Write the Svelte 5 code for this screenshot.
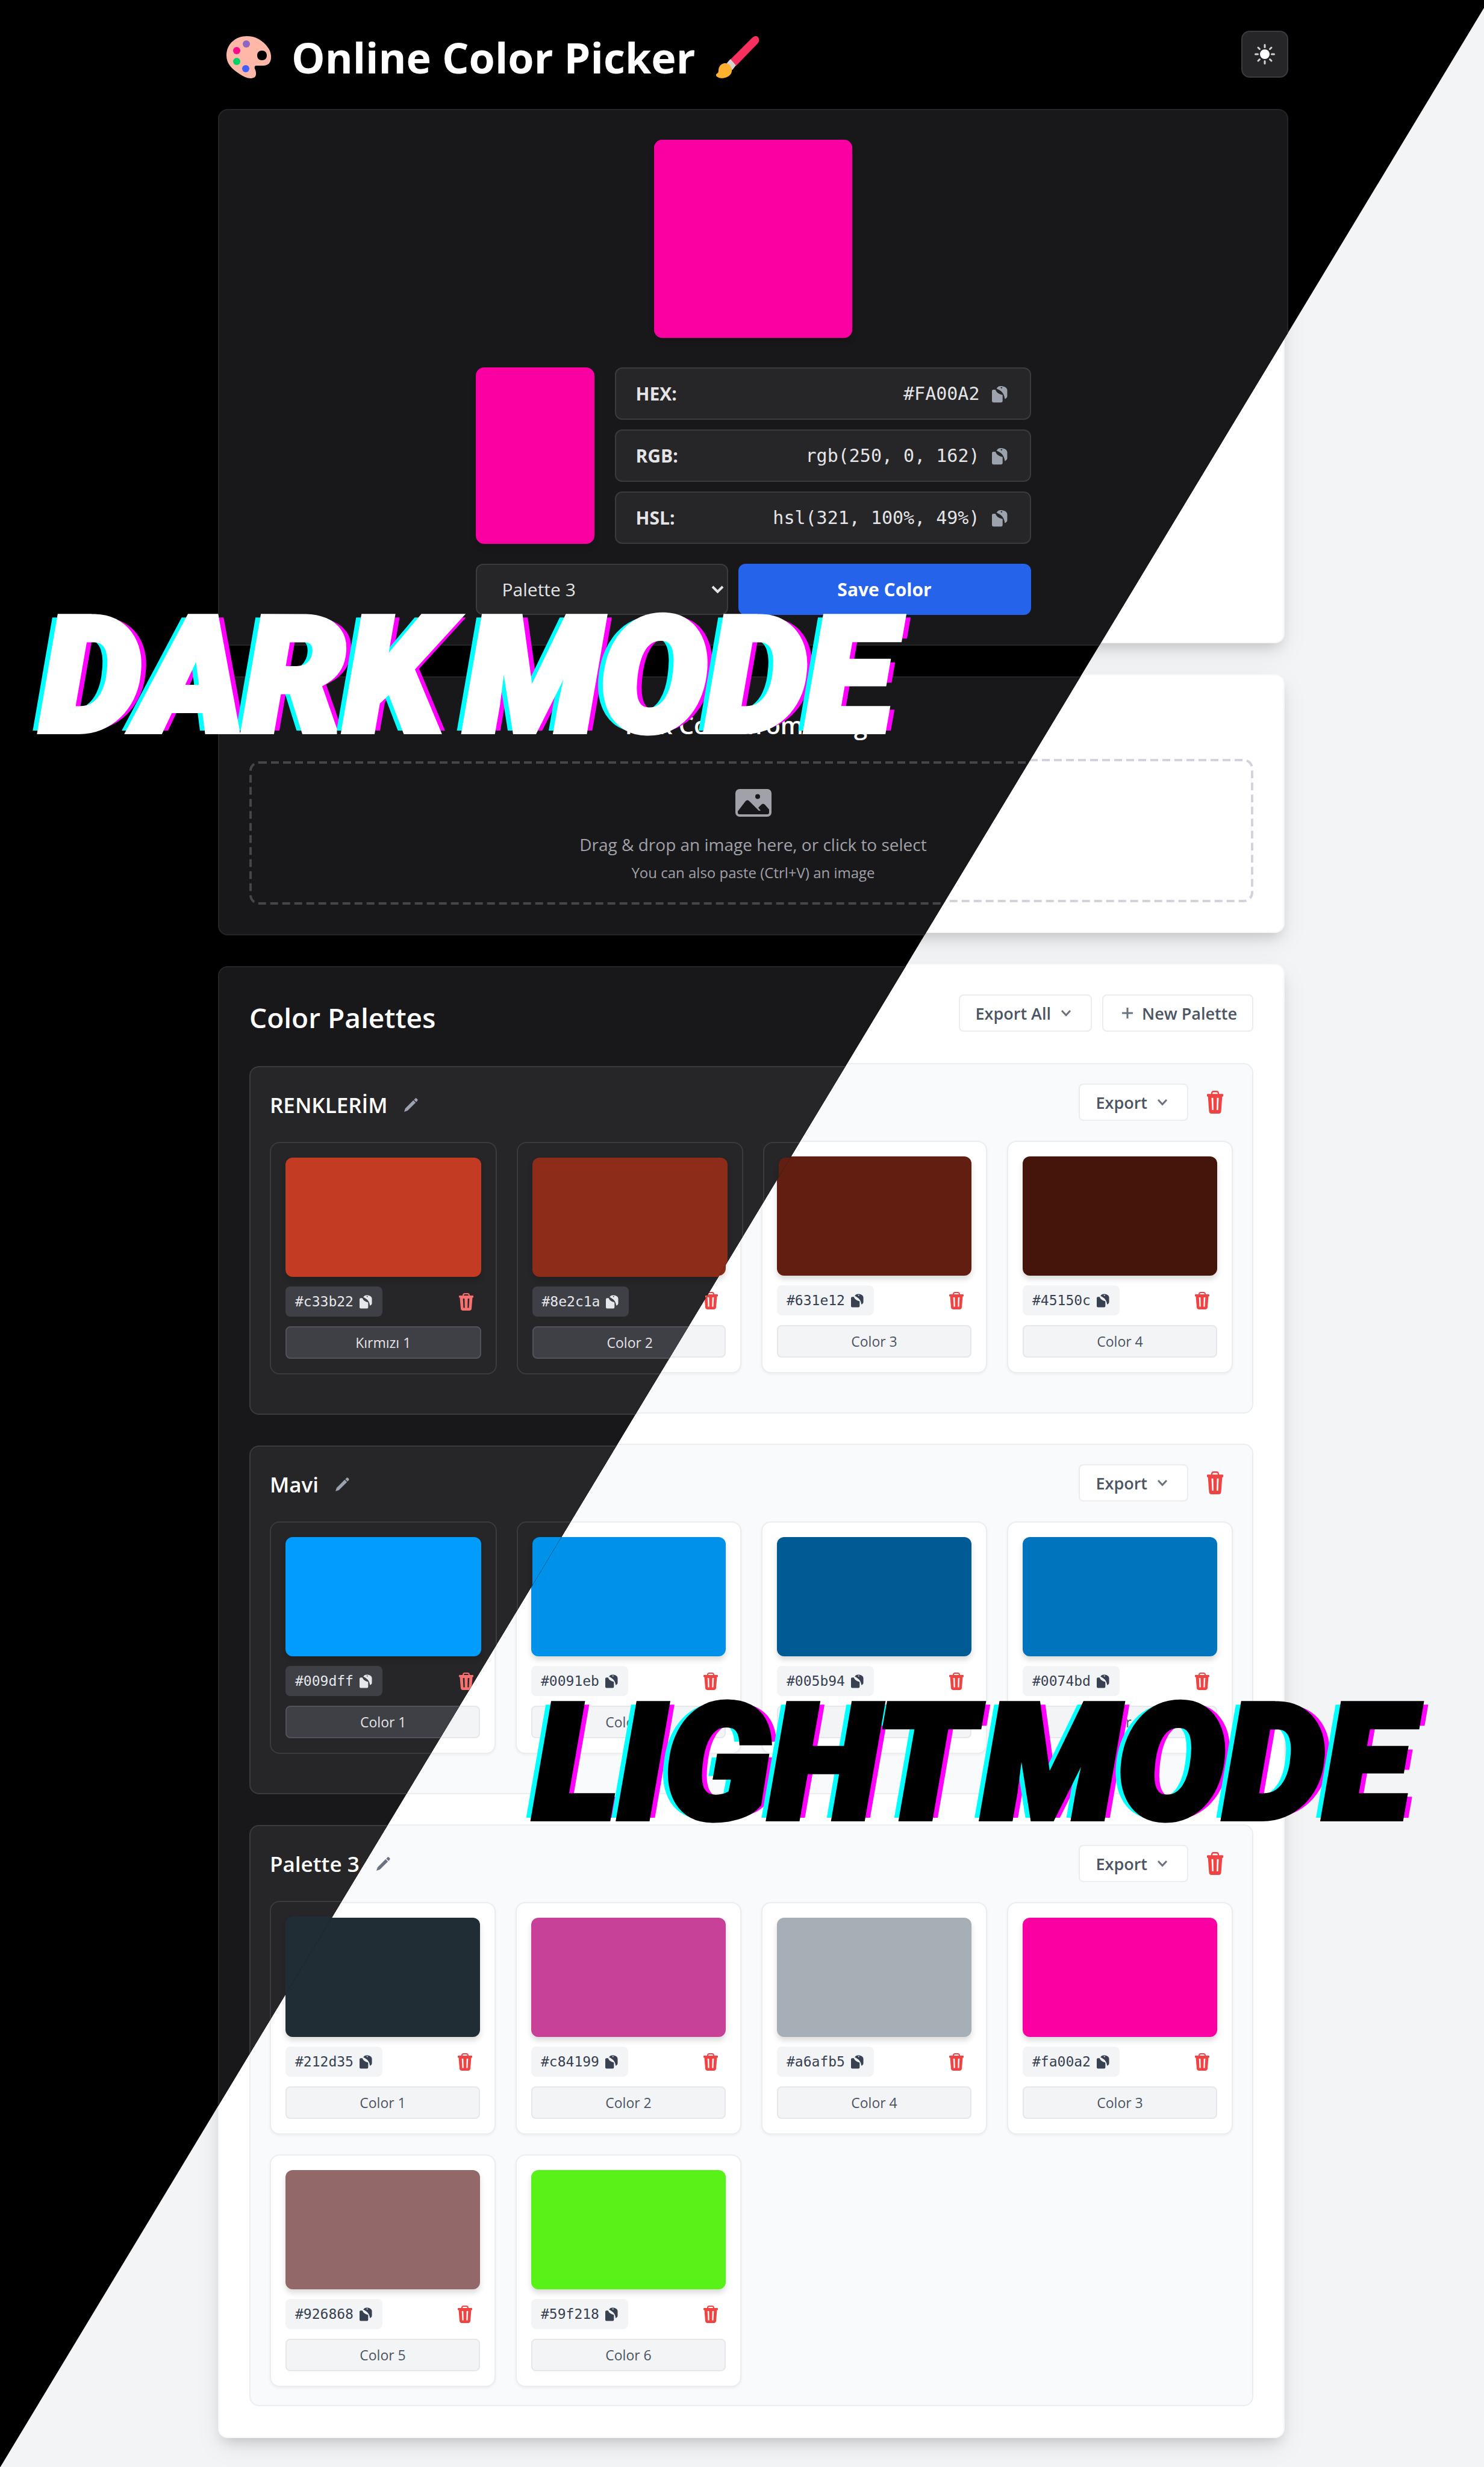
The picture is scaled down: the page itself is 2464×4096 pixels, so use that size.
<script>
  const formats = [
    { label: 'HEX:', value: '#FA00A2' },
    { label: 'RGB:', value: 'rgb(250, 0, 162)' },
    { label: 'HSL:', value: 'hsl(321, 100%, 49%)' },
  ];

  // `split` is the number of leading cards whose texts belong to the dark side.
  const palettes = [
    {
      name: 'RENKLERİM',
      split: 2,
      colors: [
        { hex: '#c33b22', name: 'Kırmızı 1' },
        { hex: '#8e2c1a', name: 'Color 2' },
        { hex: '#631e12', name: 'Color 3' },
        { hex: '#45150c', name: 'Color 4' },
      ],
    },
    {
      name: 'Mavi',
      split: 1,
      colors: [
        { hex: '#009dff', name: 'Color 1' },
        { hex: '#0091eb', name: 'Color 2' },
        { hex: '#005b94', name: 'Color 3' },
        { hex: '#0074bd', name: 'Color 4' },
      ],
    },
    {
      name: 'Palette 3',
      split: 0,
      colors: [
        { hex: '#212d35', name: 'Color 1' },
        { hex: '#c84199', name: 'Color 2' },
        { hex: '#a6afb5', name: 'Color 4' },
        { hex: '#fa00a2', name: 'Color 3' },
        { hex: '#926868', name: 'Color 5' },
        { hex: '#59f218', name: 'Color 6' },
      ],
    },
  ];

  const owns = (theme, split, i) => (theme === 'dark') === i < split;
</script>

{#snippet copyIcon()}
  <svg class="copy" viewBox="0 0 22 24" aria-hidden="true">
    <path d="M2 6h3c1 3 3 5.500 10 7.500V22a2 2 0 0 1-2 2H2a2 2 0 0 1-2-2V8a2 2 0 0 1 2-2z" />
    <path fill-rule="evenodd" d="M6.500 4.500C8 2 9.500 1.200 12 1c5 0 9.500 2 9.500 6v8c0 1.800-1 3-3.500 4.200-.3-5-2.500-9.500-7-12.300-1.500-.9-3-1.700-4.500-2.400zM12 3.200l1.300 1.300 1.500-1.200-1.400-1z" />
  </svg>
{/snippet}

{#snippet trashIcon()}
  <svg class="trash" viewBox="0 0 24 29" preserveAspectRatio="none" aria-hidden="true">
    <path fill-rule="evenodd" d="M6 4c0-2.500 1.300-4 3.500-4h5C16.700 0 18 1.500 18 4h5a1 1 0 0 1 1 1v1.500a1 1 0 0 1-1 1h-.5L21 25.500c-.2 2.200-1.500 3.500-3.500 3.500h-11C4.500 29 3.200 27.700 3 25.500L1.500 7.500H1a1 1 0 0 1-1-1V5a1 1 0 0 1 1-1zM8 4h8c0-1.300-.6-2-1.700-2H9.700C8.600 2 8 2.700 8 4zM6.700 9l.8 15.500h2.200L9.300 9zM14.700 9l-.4 15.500h2.200L17.300 9z" />
  </svg>
{/snippet}

{#snippet chevron()}
  <svg class="chevron" viewBox="0 0 18 12" aria-hidden="true"><path d="M2 2l7 7.500L16 2" /></svg>
{/snippet}

{#snippet page(theme)}
  <div class="layer {theme}">
    <header class="top">
      <h1>
        <svg class="emoji" viewBox="0 0 74 70" aria-hidden="true">
          <path fill="#ffb8a8" fill-rule="evenodd" d="M34 0c14 0 23 6 31 14 6 7 9 12 9 21 0 9-5 14-13 14H50c-3 0-4 2-3 5 2 4 2 6 2 9 0 5-4 7-9 7-6 0-12-3-18-7C8 54 0 45 0 32 0 13 15 0 34 0zM59 24c-5 0-8 3-8 8s3 8 8 8 8-3 8-8-3-8-8-8z" />
          <circle cx="33" cy="13" r="6" fill="#8d65c5" />
          <circle cx="17" cy="24" r="6" fill="#f70a8d" />
          <circle cx="17" cy="42" r="6" fill="#00d26a" />
          <circle cx="32" cy="54" r="6" fill="#3f5fff" />
        </svg>
        <span>Online Color Picker</span>
        <svg class="emoji" viewBox="0 0 70 68" aria-hidden="true">
          <path fill="#f92f60" d="M23 38L58 3c4-4 8-4 10-1 2 3 2 6-1 10L32 48z" />
          <path fill="#d3d3d3" d="M17 44l6-7 9 10-6 8z" />
          <path fill="#ffb02e" d="M5 50c3-6 9-8 15-5 6 5 7 12 3 17-5 6-16 8-22 3-2-2-1-4 1-5 3-2 1-6 3-10z" />
        </svg>
      </h1>
      <button class="theme" aria-label="Toggle theme">
        <svg viewBox="0 0 34 34" aria-hidden="true">
          <circle cx="17" cy="17" r="8" />
          <g stroke-width="3" stroke-linecap="round">
            <path d="M17 1.500v4M17 28.500v4M1.500 17h4M28.500 17h4M6 6l2.500 2.500M25.500 25.500L28 28M6 28l2.500-2.500M25.500 8.500L28 6" />
          </g>
        </svg>
      </button>
    </header>

    <section class="panel picker">
      <input class="big" type="color" value="#fa00a2" aria-label="Pick a color" />
      <div class="values">
        <div class="preview"></div>
        <div class="rows">
          {#each formats as f}
            <div class="row">
              <strong>{f.label}</strong>
              <span class="val"><code>{f.value}</code><button aria-label="Copy {f.label}">{@render copyIcon()}</button></span>
            </div>
          {/each}
        </div>
      </div>
      <div class="save">
        <div class="pick">
          <select aria-label="Palette"><option>Palette 3</option></select>
          <svg viewBox="0 0 21 13" aria-hidden="true"><path d="M2 2l8.500 8.500L19 2" /></svg>
        </div>
        <button class="primary">Save Color</button>
      </div>
    </section>

    <section class="panel image">
      <h2>Pick Color from Image</h2>
      <button class="drop">
        <svg class="dash" aria-hidden="true"><rect x="2" y="2" rx="14" /></svg>
        <svg class="photo" viewBox="0 0 60 46" aria-hidden="true">
          <path fill-rule="evenodd" d="M7 0h46a7 7 0 0 1 7 7v32a7 7 0 0 1-7 7H7a7 7 0 0 1-7-7V7a7 7 0 0 1 7-7zM4 37v2a3 3 0 0 0 3 3h46a3 3 0 0 0 3-3v-5l-7-8c-2-2-4-2-6 0l-5 5 4 5-3 0-16-16c-2-2-4-2-6 0zM37 8.500a4 4 0 1 0 0 8 4 4 0 0 0 0-8z" />
        </svg>
        <span class="lead">Drag &amp; drop an image here, or click to select</span>
        <span class="hint">You can also paste (Ctrl+V) an image</span>
      </button>
    </section>

    <section class="panel library">
      <div class="bar">
        <h2>Color Palettes</h2>
        <div class="tools">
          <button class="ghost">Export All {@render chevron()}</button>
          <button class="ghost">
            <svg class="plus" viewBox="0 0 20 20" aria-hidden="true"><path d="M10 1v18M1 10h18" /></svg>New Palette
          </button>
        </div>
      </div>
      <div class="list">
        {#each palettes as p}
          <article class="palette">
            <div class="head">
              <h3>{p.name}</h3>
              <button class="edit" aria-label="Rename {p.name}">
                <svg viewBox="0 0 24 24" aria-hidden="true">
                  <path d="M0 24l2-6L16 4l4 4L6 22zM17 3l1.500-1.500c1.500-1.500 2.500-1.500 4 0s1.500 2.500 0 4L21 7z" />
                </svg>
              </button>
              <button class="ghost">Export {@render chevron()}</button>
              <button class="remove" aria-label="Delete {p.name}">{@render trashIcon()}</button>
            </div>
            <div class="cards">
              {#each p.colors as c, i}
                {@const own = owns(theme, p.split, i)}
                <div class="card">
                  <div class="swatch" style:background={c.hex}></div>
                  <div class="meta">
                    <button class="chip" class:away={!own}>{c.hex}{@render copyIcon()}</button>
                    <button class="bin" aria-label="Delete {c.name}">{@render trashIcon()}</button>
                  </div>
                  <input type="text" value={own ? c.name : ''} aria-label="Color name" />
                </div>
              {/each}
            </div>
          </article>
        {/each}
      </div>
    </section>
  </div>
{/snippet}

<main>
  {@render page('light')}
  {@render page('dark')}
  <p class="banner dark-banner"><span>DARK</span> <span>MODE</span></p>
  <p class="banner light-banner"><span>LIGHT</span> <span>MODE</span></p>
</main>

<style>
  :global(body) {
    margin: 0;
  }
  main {
    display: grid;
    position: relative;
    overflow: hidden;
    font-family: 'Open Sans', 'Noto Sans', sans-serif;
  }
  main * {
    box-sizing: border-box;
  }
  .layer {
    grid-area: 1 / 1;
    min-width: 0;
    padding: 51px 325px 49px 362px;
    background: var(--page);
    color: var(--title);
  }
  .dark {
    --page: #000;
    --panel: #18181a;
    --panel-line: #252528;
    --box: #262628;
    --line: #3a3a40;
    --card: #262628;
    --chip: #3f3f46;
    --chip-line: #52525b;
    --title: #fff;
    --text: #e4e4e7;
    --muted: #a1a1aa;
    --icon: #9ca3af;
    --copy: #e5e7eb;
    --dash: #45454c;
    --red: #f87171;
    --btn: #3f3f46;
    --panel-shadow: none;
    --card-shadow: none;
    --top-gap: 52px;
    --bar-gap: 43px;
    --head: 60px;
    --head-gap: 32px;
    --list-gap: 51px;
    clip-path: polygon(0 0, 100% 0, 100% 0.32%, 0 100%);
  }
  .light {
    --page: #f3f4f6;
    --panel: #fff;
    --panel-line: #f7f7f8;
    --box: #f9fafb;
    --line: #ebedf0;
    --card: #fff;
    --chip: #f3f4f6;
    --chip-line: #e5e7eb;
    --title: #1f2937;
    --text: #4b5563;
    --muted: #6b7280;
    --icon: #6b7280;
    --copy: #374151;
    --dash: #d1d5db;
    --red: #ef4444;
    --btn: #fff;
    --panel-shadow: 0 12px 22px -8px rgb(0 0 0 / 17%), 0 16px 44px -2px rgb(0 0 0 / 8%);
    --card-shadow: 0 2px 4px rgb(0 0 0 / 5%);
    --top-gap: 48px;
    --bar-gap: 42px;
    --head: 62px;
    --head-gap: 33px;
    --list-gap: 50px;
    padding-right: 331px;
  }
  /* Items that lie wholly on the other theme's side of the diagonal. */
  .light .top > *,
  .light .picker > *,
  .light h2,
  .light h3,
  .light .lead,
  .light .hint,
  .light .photo,
  .dark .ghost,
  .away {
    visibility: hidden;
  }
  h1,
  h2,
  h3,
  p {
    margin: 0;
  }
  button,
  input,
  select {
    font: inherit;
    color: inherit;
    margin: 0;
    padding: 0;
    border: 0;
    background: none;
  }
  svg {
    display: block;
    flex: none;
  }
  .top {
    display: flex;
    justify-content: space-between;
    height: 78px;
    margin-bottom: var(--top-gap);
  }
  h1 {
    display: flex;
    align-items: center;
    gap: 34px;
    padding-left: 14px;
    font-size: 70px;
    line-height: 88px;
    height: 88px;
    font-weight: 700;
  }
  .emoji {
    width: 74px;
    height: 70px;
  }
  .theme {
    display: grid;
    place-items: center;
    width: 78px;
    height: 78px;
    border: 2px solid var(--line);
    border-radius: 14px;
    background: var(--box);
  }
  .theme svg {
    width: 34px;
    fill: #fff;
    stroke: #d4d4d8;
  }
  .theme circle {
    stroke: none;
  }
  .panel {
    background: var(--panel);
    border: 2px solid var(--panel-line);
    border-radius: 16px;
    box-shadow: var(--panel-shadow);
    padding: 49px 50px;
    margin-bottom: 51px;
    position: relative;
  }
  .picker {
    display: flex;
    flex-direction: column;
    align-items: center;
  }
  .big {
    appearance: none;
    width: 329px;
    height: 329px;
    border-radius: 14px;
    overflow: hidden;
    background: #fa00a2;
    box-shadow: 0 7px 10px rgb(0 0 0 / 12%);
    margin-bottom: 49px;
  }
  .big::-webkit-color-swatch-wrapper {
    padding: 0;
  }
  .big::-webkit-color-swatch {
    border: 0;
  }
  .values,
  .save {
    display: flex;
    width: 922px;
    max-width: 100%;
  }
  .values {
    gap: 34px;
    margin-bottom: 33px;
  }
  .preview {
    width: 197px;
    border-radius: 14px;
    background: #fa00a2;
    box-shadow: 0 7px 10px rgb(0 0 0 / 12%);
  }
  .rows {
    flex: 1;
    display: grid;
    gap: 16px;
  }
  .row {
    display: flex;
    justify-content: space-between;
    align-items: center;
    height: 87px;
    padding: 0 37px 0 33px;
    border: 2px solid var(--line);
    border-radius: 12px;
    background: var(--box);
    color: var(--text);
    font-size: 30px;
  }
  .row strong {
    font-weight: 700;
  }
  .val {
    display: flex;
    align-items: center;
    gap: 20px;
  }
  code {
    font-family: 'DejaVu Sans Mono', monospace;
    font-size: 30px;
  }
  .copy {
    width: 21px;
    height: 24px;
    fill: var(--copy);
  }
  .row .copy {
    width: 26px;
    height: 30px;
    fill: var(--icon);
  }
  .save {
    gap: 17px;
    height: 85px;
  }
  .pick {
    display: grid;
    width: 419px;
    color: var(--text);
  }
  .pick select {
    grid-area: 1 / 1;
    appearance: none;
    padding: 0 42px;
    border: 2px solid var(--line);
    border-radius: 12px;
    background: var(--box);
    font-size: 30px;
  }
  .pick svg {
    grid-area: 1 / 1;
    place-self: center end;
    width: 21px;
    margin-right: 7px;
    fill: none;
    stroke: var(--text);
    stroke-width: 4;
  }
  .primary {
    flex: 1;
    border-radius: 12px;
    background: #2563eb;
    color: #fff;
    font-size: 30px;
    font-weight: 700;
  }
  .image h2 {
    font-size: 40px;
    line-height: 60px;
    font-weight: 600;
    text-align: center;
    margin-bottom: 30px;
  }
  .drop {
    position: relative;
    display: flex;
    flex-direction: column;
    align-items: center;
    width: 100%;
    height: 238px;
    padding-top: 46px;
    color: var(--muted);
  }
  .dash {
    position: absolute;
    inset: 0;
    width: 100%;
    height: 100%;
  }
  .dash rect {
    width: calc(100% - 4px);
    height: calc(100% - 4px);
    fill: none;
    stroke: var(--dash);
    stroke-width: 4;
    stroke-dasharray: 13 7;
  }
  .photo {
    width: 60px;
    fill: var(--muted);
    margin-bottom: 24px;
  }
  .lead {
    font-size: 28px;
    line-height: 44px;
    margin-bottom: 5px;
  }
  .hint {
    font-size: 24px;
    line-height: 40px;
  }
  .library {
    margin-bottom: 0;
    padding-bottom: 51px;
  }
  .bar {
    display: flex;
    justify-content: space-between;
    align-items: flex-start;
    height: 72px;
    margin-bottom: var(--bar-gap);
  }
  .bar h2 {
    font-size: 46px;
    line-height: 68px;
    font-weight: 600;
  }
  .tools {
    display: flex;
    gap: 17px;
  }
  .ghost {
    display: flex;
    align-items: center;
    gap: 16px;
    height: 62px;
    padding: 0 32px 0 26px;
    border: 2px solid var(--line);
    border-radius: 8px;
    background: var(--btn);
    color: var(--text);
    font-size: 27px;
    font-weight: 600;
    white-space: nowrap;
  }
  .chevron,
  .plus {
    width: 18px;
    fill: none;
    stroke: var(--icon);
    stroke-width: 3;
  }
  .plus {
    width: 20px;
  }
  .tools .ghost:last-child {
    padding: 0 25px 0 30px;
    gap: 14px;
  }
  .list {
    display: grid;
    gap: var(--list-gap);
  }
  .palette {
    border: 2px solid var(--line);
    border-radius: 16px;
    background: var(--box);
    padding: 32px 32px 30px;
  }
  .head {
    display: flex;
    align-items: center;
    height: var(--head);
    margin-bottom: var(--head-gap);
  }
  h3 {
    font-size: 35px;
    font-weight: 600;
  }
  .edit {
    margin: 0 auto 0 28px;
  }
  .edit svg {
    width: 23px;
    fill: var(--icon);
  }
  .trash {
    width: 24px;
    height: 29px;
    fill: var(--red);
  }
  .remove {
    padding: 0 16px 0 31px;
  }
  .remove .trash {
    width: 27px;
    height: 38px;
  }
  .cards {
    display: grid;
    grid-template-columns: repeat(4, 1fr);
    align-content: start;
    gap: 33px;
    min-height: 421px;
  }
  .card {
    display: grid;
    gap: 16px;
    padding: 24px;
    min-width: 0;
    border: 2px solid var(--line);
    border-radius: 16px;
    background: var(--card);
    box-shadow: var(--card-shadow);
  }
  .swatch {
    height: 198px;
    border-radius: 12px;
    box-shadow: 0 6px 10px rgb(0 0 0 / 14%);
  }
  .meta {
    display: flex;
    justify-content: space-between;
    align-items: center;
  }
  .chip {
    display: flex;
    align-items: center;
    gap: 10px;
    height: 50px;
    padding: 0 17px 0 16px;
    border-radius: 8px;
    background: var(--chip);
    color: var(--copy);
    font-family: 'DejaVu Sans Mono', monospace;
    font-size: 23px;
  }
  .bin {
    padding: 0 13px;
  }
  .card input {
    width: 100%;
    height: 54px;
    border: 2px solid var(--chip-line);
    border-radius: 8px;
    background: var(--chip);
    color: var(--text);
    font-size: 23px;
    text-align: center;
  }
  .banner {
    position: absolute;
    display: flex;
    font-family: Roboto, sans-serif;
    font-size: 264px;
    line-height: 264px;
    font-weight: 900;
    font-style: italic;
    white-space: nowrap;
    -webkit-text-stroke: 12px;
    stroke-linejoin: round;
    text-shadow:
      -14px 0 #0ff,
      14px 0 #f0f;
  }
  .dark-banner {
    top: 991px;
    left: 68px;
    gap: 36px;
    color: #fff;
  }
  .light-banner {
    top: 2796px;
    right: 122px;
    gap: 16px;
    color: #000;
  }
</style>
